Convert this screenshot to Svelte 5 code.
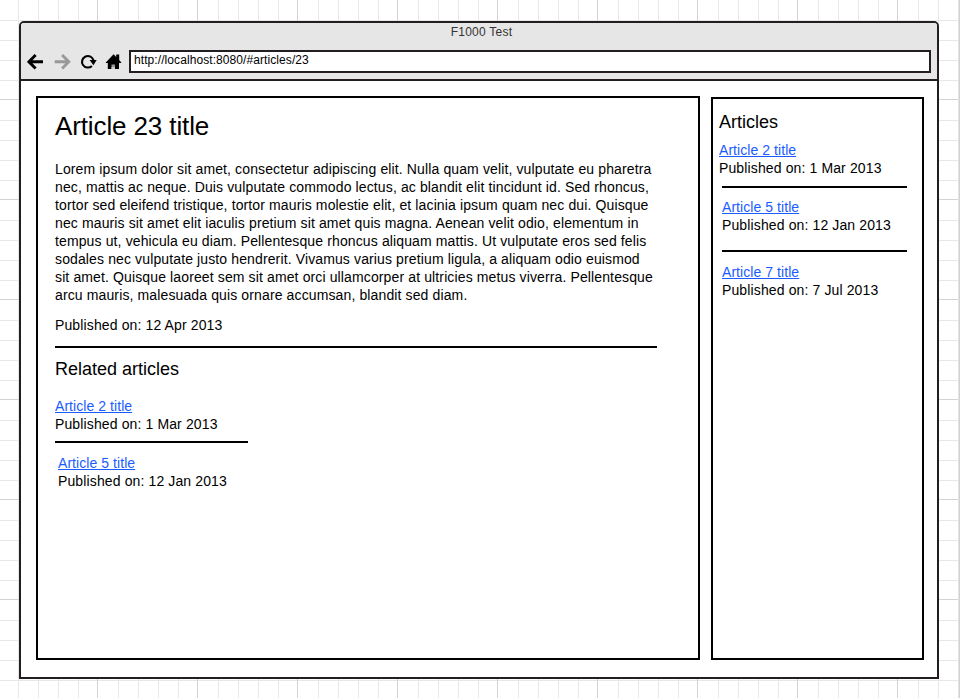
<script>
  const paragraph = [
    'Lorem ipsum dolor sit amet, consectetur adipiscing elit. Nulla quam velit, vulputate eu pharetra',
    'nec, mattis ac neque. Duis vulputate commodo lectus, ac blandit elit tincidunt id. Sed rhoncus,',
    'tortor sed eleifend tristique, tortor mauris molestie elit, et lacinia ipsum quam nec dui. Quisque',
    'nec mauris sit amet elit iaculis pretium sit amet quis magna. Aenean velit odio, elementum in',
    'tempus ut, vehicula eu diam. Pellentesque rhoncus aliquam mattis. Ut vulputate eros sed felis',
    'sodales nec vulputate justo hendrerit. Vivamus varius pretium ligula, a aliquam odio euismod',
    'sit amet. Quisque laoreet sem sit amet orci ullamcorper at ultricies metus viverra. Pellentesque',
    'arcu mauris, malesuada quis ornare accumsan, blandit sed diam.'
  ];
  const related = [
    { title: 'Article 2 title', date: '1 Mar 2013' },
    { title: 'Article 5 title', date: '12 Jan 2013' }
  ];
  const articles = [...related, { title: 'Article 7 title', date: '7 Jul 2013' }];
</script>

{#snippet entry(item)}
  <div class="entry">
    <a href="#articles">{item.title}</a>
    <div>Published on: {item.date}</div>
  </div>
{/snippet}

<div class="canvas">
  <div class="window">
    <header>
      <div class="caption">F1000 Test</div>
      <div class="toolbar">
        <svg width="102" height="24" viewBox="0 0 102 24" fill="none">
          <path d="M16 11.800H2.500M8.600 4.900L1.900 11.800L8.600 18.600" stroke="#000" stroke-width="2.900" />
          <path d="M27.700 11.800H41.200M35.100 4.900L41.800 11.800L35.100 18.600" stroke="#999" stroke-width="2.900" />
          <path d="M64.900 15.900A5.800 5.800 0 1 1 66.500 10.500" stroke="#000" stroke-width="2.100" />
          <path d="M62.600 10H69.700L66.400 15.200Z" fill="#000" />
          <path d="M78.800 12.500L86.600 4.200L89.200 6.900V4.500H92.200V10L94.300 12.500V13H92V19H80.800V13H78.800Z" fill="#000" />
          <path d="M84.500 14.500H88V19H84.500Z" fill="#999" />
          <path d="M84.500 17H88V19H84.500Z" fill="#ccc" />
        </svg>
        <div class="address">http://localhost:8080/#articles/23</div>
      </div>
    </header>
    <div class="body">
      <main>
        <h1>Article 23 title</h1>
        <div class="text">
          {#each paragraph as line}<div>{line}</div>{/each}
        </div>
        <div class="date">Published on: 12 Apr 2013</div>
        <hr />
        <h2>Related articles</h2>
        <div class="related">
          {#each related as item, i}
            {#if i}<hr />{/if}
            {@render entry(item)}
          {/each}
        </div>
      </main>
      <aside>
        <h2>Articles</h2>
        {#each articles as item, i}
          {#if i}<hr />{/if}
          {@render entry(item)}
        {/each}
      </aside>
    </div>
  </div>
</div>

<style>
  :global(body) { margin: 0; }
  .canvas {
    box-sizing: border-box;
    width: 960px;
    height: 698px;
    padding: 21px 0 0 19px;
    overflow: hidden;
    font-family: 'Liberation Sans', Arial, sans-serif;
    font-size: 14px;
    line-height: 18px;
    letter-spacing: 0.125px;
    color: #000;
    white-space: nowrap;
    background:
      linear-gradient(90deg, #e2e2e2 1px, #d2d2d2 1px) 958px 0 / 2px 100% no-repeat,
      linear-gradient(90deg, transparent 97px, #d3d3d3 97px 98px, transparent 98px) 0 0 / 100px 100px,
      linear-gradient(transparent 99px, #d3d3d3 99px) 0 0 / 100px 100px,
      linear-gradient(90deg, transparent 18px, #e8e8e8 18px 19px, transparent 19px 38px, #e8e8e8 38px 39px, transparent 39px 58px, #e8e8e8 58px 59px, transparent 59px 78px, #e8e8e8 78px 79px, transparent 79px) 0 0 / 100px 100px,
      linear-gradient(transparent 20px, #e8e8e8 20px 21px, transparent 21px 40px, #e8e8e8 40px 41px, transparent 41px 60px, #e8e8e8 60px 61px, transparent 61px 80px, #e8e8e8 80px 81px, transparent 81px) 0 0 / 100px 100px,
      #fff;
  }
  .window {
    box-sizing: border-box;
    width: 920px;
    height: 658px;
    border: 2px solid #231f20;
    border-radius: 5px 5px 0 0;
    background: #fff;
  }
  header {
    height: 56px;
    border-bottom: 2px solid #231f20;
    border-radius: 3px 3px 0 0;
    background: #e6e6e6;
  }
  .caption {
    height: 27px;
    padding-left: 5px;
    text-align: center;
    font-size: 12px;
    line-height: 18px;
    letter-spacing: 0.25px;
    color: #333;
  }
  .toolbar { display: flex; padding-left: 6px; }
  .address {
    box-sizing: border-box;
    width: 802px;
    height: 23px;
    padding-left: 3px;
    border: 2px solid #231f20;
    background: #fff;
    font-size: 12px;
    line-height: 17px;
    letter-spacing: 0.08px;
  }
  .body { display: flex; gap: 11px; padding: 15px 0 0 15px; }
  main, aside { box-sizing: border-box; border: 2px solid #000; }
  main { width: 664px; height: 564px; padding: 12px 17px; }
  aside { width: 213px; height: 563px; margin-top: 1px; padding: 12px 6px; }
  h1, h2 { margin: 0; font-weight: 400; }
  h1 { font-size: 26px; line-height: 32px; letter-spacing: -0.12px; }
  h2 { font-size: 18px; line-height: 22px; letter-spacing: 0; }
  .text { margin-top: 18px; }
  .date { margin-top: 12px; }
  hr { height: 2px; margin: 0; border: 0; background: #000; }
  main > hr { width: 602px; margin: 12px 0 10px; }
  .related { width: 193px; margin-top: 17px; }
  .related hr { margin: 8px 0 11px; }
  hr ~ .entry { padding-left: 3px; }
  a { display: block; color: #1a5cff; letter-spacing: 0.06px; text-underline-offset: 1px; text-decoration-thickness: 1px; }
  aside .entry { padding-left: 0; }
  aside h2 { margin-bottom: 8px; }
  aside hr { width: 185px; margin: 9px 0 10px 3px; }
  aside hr ~ .entry { padding-left: 3px; }
  aside hr ~ hr { margin: 16px 0 11px 3px; }
</style>
